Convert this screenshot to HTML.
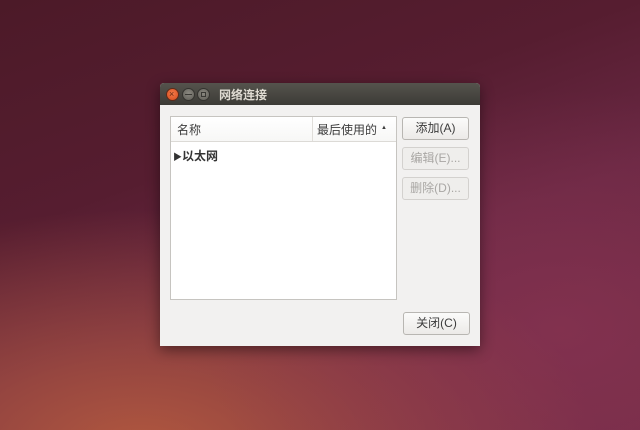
<!DOCTYPE html>
<html><head><meta charset="utf-8"><style>
*{margin:0;padding:0;box-sizing:border-box}
body{width:640px;height:430px;overflow:hidden;position:relative;font-family:"Liberation Sans","Noto Sans CJK SC",sans-serif;
background:
radial-gradient(ellipse 360px 240px at 560px 330px, rgba(145,55,85,.55), rgba(145,55,85,0)),
radial-gradient(ellipse 460px 240px at 140px 450px, rgba(180,90,62,.95), rgba(180,90,62,0)),
linear-gradient(160deg,#4c1a28 0%,#561d30 35%,#6a2844 60%,#742c48 100%);}
.win{position:absolute;left:160px;top:83px;width:320px;height:263px;background:#f2f1f0;box-shadow:0 4px 14px rgba(0,0,0,.45);border-radius:4px 4px 0 0}
.tb{height:22px;background:linear-gradient(#55534d,#3c3b37);border-radius:4px 4px 0 0;position:relative}
.tb .t{position:absolute;left:59px;top:3px;color:#dfdbd2;font-size:12px;font-weight:bold}
.c{position:absolute;top:5px;width:13px;height:13px;border-radius:50%}
.list{position:absolute;left:10px;top:33px;width:227px;height:184px;background:#fff;border:1px solid #c6c4c0}
.hd{height:25px;border-bottom:1px solid #dcdad6;position:relative;font-size:12px;color:#3c3c3c;background:linear-gradient(#fff,#f7f7f6)}
.btn{position:absolute;left:242px;width:67px;height:23px;border:1px solid #b8b6b2;border-radius:3px;background:linear-gradient(#fbfbfa,#eceae8);font-size:12px;color:#3c3c3c;text-align:center;line-height:21px}
.dis{color:#a9a7a4;border-color:#d3d1ce;background:#efeeec}
</style></head><body>
<div class="win">
 <div class="tb">
  <div class="c" style="left:6px;background:radial-gradient(circle at 50% 40%,#f47a4a,#d44b1c);border:1px solid #5c2a1a"></div>
  <span style="position:absolute;left:9px;top:5px;font-size:9px;color:#6a2a12;line-height:13px">×</span>
  <div class="c" style="left:22px;background:radial-gradient(circle at 50% 40%,#8a8880,#5e5c56);border:1px solid #34332f"></div>
  <div style="position:absolute;left:25px;top:11px;width:7px;height:1px;background:#3a3935"></div>
  <div class="c" style="left:37px;background:radial-gradient(circle at 50% 40%,#8a8880,#5e5c56);border:1px solid #34332f"></div>
  <div style="position:absolute;left:41px;top:9px;width:5px;height:5px;border:1px solid #3a3935"></div>
  <div class="t">网络连接</div>
 </div>
 <div class="list">
  <div class="hd"><span style="position:absolute;left:6px;top:4px">名称</span>
   <div style="position:absolute;left:141px;top:0;width:1px;height:24px;background:#e0deda"></div>
   <span style="position:absolute;left:146px;top:4px">最后使用的</span>
   <span style="position:absolute;left:210px;top:8px;font-size:6px">▲</span></div>
  <div style="position:absolute;left:2px;top:30px;font-size:12px;font-weight:bold;color:#333"><span style="font-size:9px">▶</span>以太网</div>
 </div>
 <div class="btn" style="top:34px">添加(A)</div>
 <div class="btn dis" style="top:64px">编辑(E)...</div>
 <div class="btn dis" style="top:94px">删除(D)...</div>
 <div class="btn" style="top:229px;left:243px">关闭(C)</div>
</div>
</body></html>
